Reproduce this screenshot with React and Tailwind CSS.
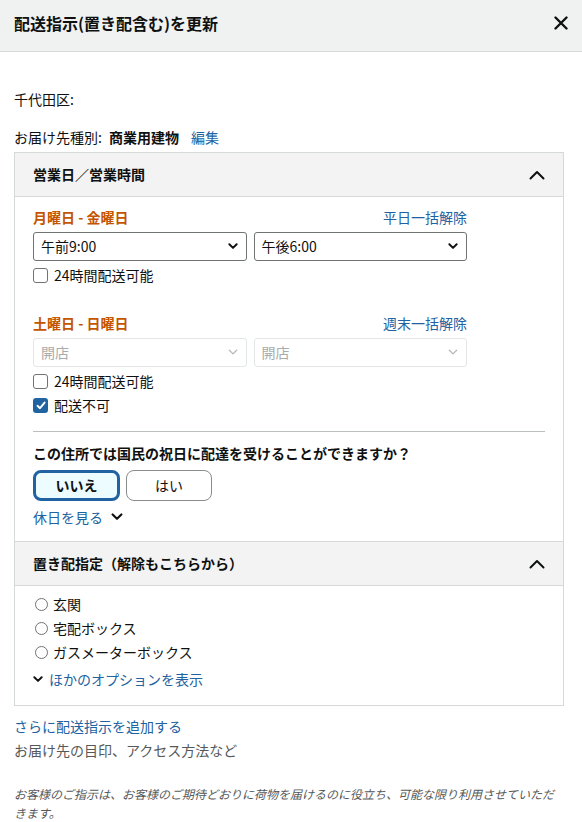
import React from "react";

const font = { fontFamily: '"Noto Sans CJK JP", "Noto Sans", sans-serif' };

function ChevronUp() {
  return (
    <svg width="16" height="10" viewBox="0 0 16 10" fill="none">
      <path d="M1.5 8.5 L8 2 L14.5 8.5" stroke="#0f1111" strokeWidth="2" strokeLinecap="round" strokeLinejoin="round" />
    </svg>
  );
}

function ChevronDown({ size = 12, color = "#0f1111", width = 2.2 }) {
  return (
    <svg width={size} height={size * 0.65} viewBox="0 0 12 8" fill="none">
      <path d="M1.5 1.5 L6 6 L10.5 1.5" stroke={color} strokeWidth={width} strokeLinecap="round" strokeLinejoin="round" />
    </svg>
  );
}

function FakeSelect({ value, disabled }) {
  return (
    <div
      className={`flex h-[29px] flex-1 items-center justify-between rounded-[3px] border pl-[7px] pr-[8px] text-[14px] ${
        disabled ? "border-[#e3e6e6] text-[#a9acac]" : "border-[#6f7373] text-[#0f1111]"
      }`}
    >
      <span>{value}</span>
      <ChevronDown size={10} color={disabled ? "#b5b8b8" : "#0f1111"} width={disabled ? 1.6 : 2.4} />
    </div>
  );
}

function Checkbox({ checked, label }) {
  return (
    <label className="flex h-[20px] items-center gap-[6px] text-[14px] text-[#0f1111]">
      {checked ? (
        <span className="flex h-[15px] w-[15px] items-center justify-center rounded-[3px] bg-[#2162a1]">
          <svg width="10" height="9" viewBox="0 0 10 9" fill="none">
            <path d="M1.5 4.8 L4 7.2 L8.6 1.6" stroke="#fff" strokeWidth="1.9" strokeLinecap="round" strokeLinejoin="round" />
          </svg>
        </span>
      ) : (
        <span className="h-[15px] w-[15px] rounded-[3px] border border-[#6f7373] bg-white" />
      )}
      <span>{label}</span>
    </label>
  );
}

function Radio({ label }) {
  return (
    <label className="flex h-[20px] items-center gap-[5px] text-[14px] text-[#0f1111]">
      <span className="ml-[2px] h-[13px] w-[13px] rounded-full border border-[#6f7373] bg-white" />
      <span>{label}</span>
    </label>
  );
}

function SectionHeader({ title }) {
  return (
    <div className="flex h-[44px] items-center justify-between border-b border-[#d5d9d9] bg-[#f3f3f3] pl-[18px] pr-[18px]">
      <span className="text-[14px] font-bold text-[#0f1111]">{title}</span>
      <ChevronUp />
    </div>
  );
}

export default function App() {
  return (
    <div className="min-h-screen w-[582px] bg-white" style={font}>
      {/* modal header */}
      <div className="flex h-[52px] items-start justify-between border-b border-[#d5d9d9] bg-[#f0f2f2] pl-[14px] pr-[14px] pt-[11px]">
        <h1 className="text-[16px] font-bold leading-[24px] text-[#0f1111]">配送指示(置き配含む)を更新</h1>
        <svg width="14" height="14" viewBox="0 0 14 14" className="mt-[5px]" fill="none">
          <path d="M1.5 1.5 L12.5 12.5 M12.5 1.5 L1.5 12.5" stroke="#0f1111" strokeWidth="2.4" strokeLinecap="round" />
        </svg>
      </div>

      <div className="pl-[14px] pr-[18px] pt-[37px]">
        <div className="text-[14px] leading-[20px] text-[#0f1111]">千代田区:</div>
        <div className="h-[18px]" />
        <div className="flex items-center text-[14px] leading-[20px] text-[#0f1111]">
          <span>お届け先種別:</span>
          <span className="ml-[7px] font-bold">商業用建物</span>
          <span className="ml-[12px] text-[#2162a1]">編集</span>
        </div>

        {/* settings box */}
        <div className="mt-[5px] border border-[#d5d9d9]">
          <SectionHeader title="営業日／営業時間" />
          <div className="pb-[14px] pl-[18px] pr-[18px] pt-[10px]">
            <div className="w-[434px]">
              <div className="flex h-[20px] items-center justify-between text-[14px]">
                <span className="font-bold text-[#c45500]">月曜日 - 金曜日</span>
                <span className="text-[#2162a1]">平日一括解除</span>
              </div>
              <div className="mt-[5px] flex gap-[7px]">
                <FakeSelect value="午前9:00" />
                <FakeSelect value="午後6:00" />
              </div>
              <div className="mt-[4px]">
                <Checkbox label="24時間配送可能" />
              </div>

              <div className="mt-[28px] flex h-[20px] items-center justify-between text-[14px]">
                <span className="font-bold text-[#c45500]">土曜日 - 日曜日</span>
                <span className="text-[#2162a1]">週末一括解除</span>
              </div>
              <div className="mt-[5px] flex gap-[7px]">
                <FakeSelect value="開店" disabled />
                <FakeSelect value="開店" disabled />
              </div>
              <div className="mt-[4px] flex flex-col gap-[4px]">
                <Checkbox label="24時間配送可能" />
                <Checkbox checked label="配送不可" />
              </div>
            </div>

            <div className="mt-[16px] border-t border-[#bbbfbf]" />

            <div className="mt-[11px] text-[14px] font-bold leading-[20px] text-[#0f1111]">
              この住所では国民の祝日に配達を受けることができますか？
            </div>
            <div className="mt-[7px] flex gap-[6px]">
              <button className="h-[31px] w-[87px] rounded-[8px] border-[3px] border-[#2162a1] bg-[#edfdff] text-[14px] font-bold text-[#0f1111]">
                いいえ
              </button>
              <button className="h-[31px] w-[86px] rounded-[8px] border border-[#888c8c] bg-white text-[14px] text-[#0f1111]">
                はい
              </button>
            </div>
            <div className="mt-[6px] flex h-[20px] items-center gap-[8px] text-[14px] text-[#2162a1]">
              <span>休日を見る</span>
              <ChevronDown size={12} width={2.2} />
            </div>
          </div>

          <div className="border-t border-[#d5d9d9]">
            <SectionHeader title="置き配指定（解除もこちらから）" />
          </div>
          <div className="flex flex-col gap-[4px] pb-[16px] pl-[18px] pt-[8px]">
            <Radio label="玄関" />
            <Radio label="宅配ボックス" />
            <Radio label="ガスメーターボックス" />
            <div className="mt-[3px] flex h-[20px] items-center gap-[6px] text-[14px] text-[#2162a1]">
              <ChevronDown size={10} width={2.4} />
              <span>ほかのオプションを表示</span>
            </div>
          </div>
        </div>

        <div className="mt-[10px] text-[14px] leading-[20px] text-[#2162a1]">さらに配送指示を追加する</div>
        <div className="mt-[4px] text-[14px] leading-[20px] text-[#565959]">お届け先の目印、アクセス方法など</div>

        <p className="mt-[24px] text-[12px] italic leading-[19px] text-[#565959]">
          お客様のご指示は、お客様のご期待どおりに荷物を届けるのに役立ち、可能な限り利用させていただきます。
        </p>
      </div>
    </div>
  );
}
